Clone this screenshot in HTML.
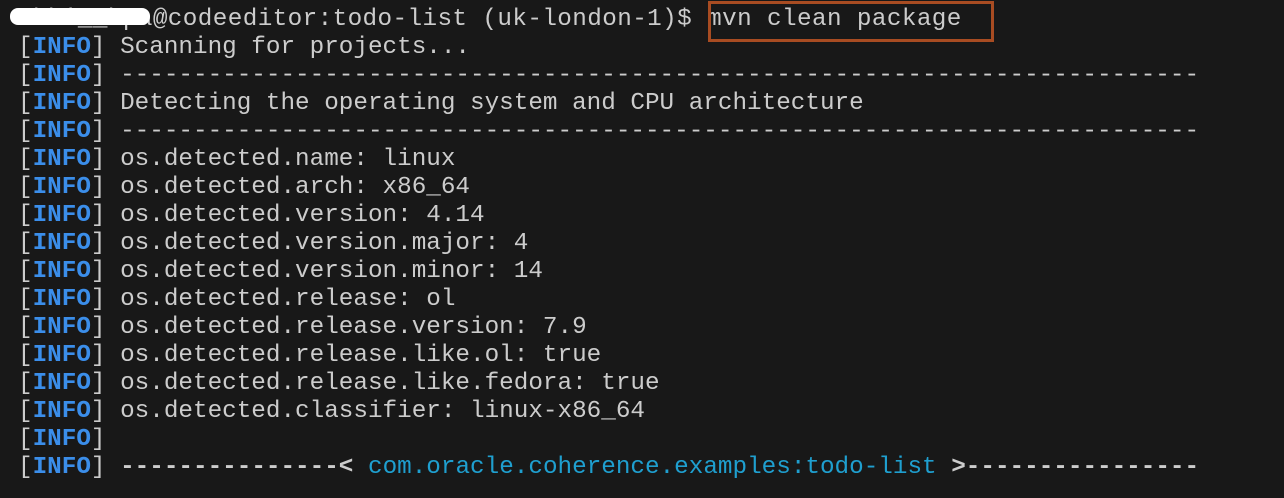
<!DOCTYPE html>
<html><head><style>
html,body{margin:0;padding:0;background:#181818;width:1284px;height:498px;overflow:hidden}
pre{margin:0;position:absolute;left:18px;top:6px;font-family:"Liberation Mono",monospace;font-size:24.3px;line-height:28px;color:#cccccc;white-space:pre}
b{color:#3b8eea;font-weight:bold}
.c{color:#1f9fcf}
.p{letter-spacing:0.4px}
.box{position:absolute;left:708px;top:1px;width:280px;height:35px;border:3px solid #a84c22}
.blob{position:absolute;left:10px;top:8px;width:140px;height:17px;background:#fff;border-radius:8px}
</style></head><body>
<pre><span class="p">abhi__hpa@codeeditor:todo-list (uk-london-1)$ mvn clean package</span>
[<b>INFO</b>] Scanning for projects...
[<b>INFO</b>] --------------------------------------------------------------------------
[<b>INFO</b>] Detecting the operating system and CPU architecture
[<b>INFO</b>] --------------------------------------------------------------------------
[<b>INFO</b>] os.detected.name: linux
[<b>INFO</b>] os.detected.arch: x86_64
[<b>INFO</b>] os.detected.version: 4.14
[<b>INFO</b>] os.detected.version.major: 4
[<b>INFO</b>] os.detected.version.minor: 14
[<b>INFO</b>] os.detected.release: ol
[<b>INFO</b>] os.detected.release.version: 7.9
[<b>INFO</b>] os.detected.release.like.ol: true
[<b>INFO</b>] os.detected.release.like.fedora: true
[<b>INFO</b>] os.detected.classifier: linux-x86_64
[<b>INFO</b>]
[<b>INFO</b>] <span style="font-weight:bold">---------------&lt;</span> <span class="c">com.oracle.coherence.examples:todo-list</span> <span style="font-weight:bold">&gt;----------------</span></pre>
<div class="blob"></div>
<div class="box"></div>
</body></html>
